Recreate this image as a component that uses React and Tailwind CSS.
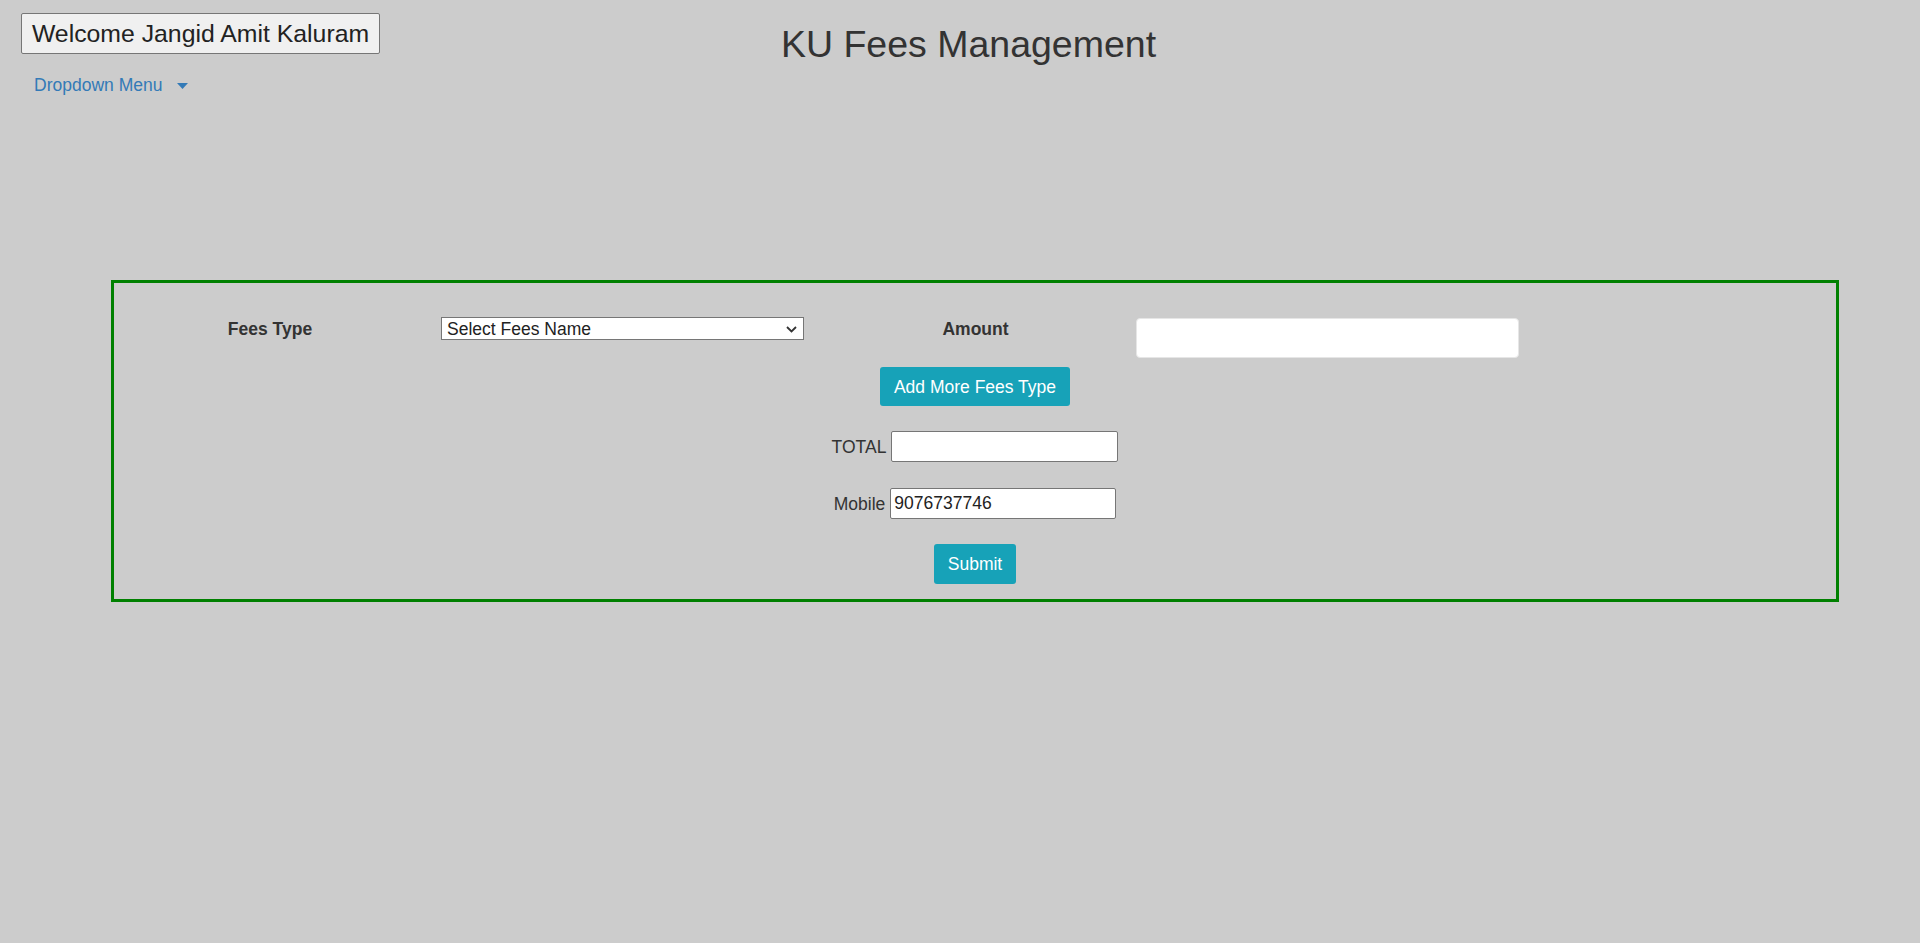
import React from "react";

export default function App() {
  const font = { fontFamily: '"Liberation Sans", Arial, sans-serif' };
  return (
    <div
      className="min-h-[943px] w-full bg-[#cccccc] text-[#333333]"
      style={font}
    >
      <div className="grid">
        <div className="col-start-1 row-start-1 flex flex-col items-start pl-[21px] pt-[13px]">
          <button className="flex h-[41px] w-[359px] items-center justify-center rounded-[2px] border border-[#767676] bg-[#f0f0f0] text-[24.8px] leading-[28px] text-[#222222]">
            Welcome Jangid Amit Kaluram
          </button>
          <div className="mt-[21px] flex items-center pl-[13px] text-[17.5px] leading-[20px] text-[#337ab7]">
            <span>Dropdown Menu</span>
            <svg
              className="ml-[15px] mt-[1px]"
              width="11"
              height="6"
              viewBox="0 0 11 6"
            >
              <path d="M0 0 L11 0 L5.5 6 Z" fill="#337ab7" />
            </svg>
          </div>
        </div>
        <div className="col-start-1 row-start-1 flex justify-center pl-[17px] pt-[24px]">
          <h1 className="text-[37.5px] font-normal leading-[41px] text-[#333333]">
            KU Fees Management
          </h1>
        </div>
      </div>

      <div className="ml-[111px] mt-[185px] w-[1728px] border-[3px] border-[#008000] pb-[15px] pt-[34px]">
        <div className="flex items-start">
          <div className="mt-[2px] w-[312px] text-center text-[17.5px] font-bold leading-[20px]">
            Fees Type
          </div>
          <div className="ml-[15px] flex h-[23px] w-[363px] items-center justify-between border border-[#767676] bg-white pl-[5px] pr-[6px] text-[17.5px] leading-[20px] text-[#222222]">
            <span>Select Fees Name</span>
            <svg width="11" height="7" viewBox="0 0 11 7" className="mt-[1px]">
              <path
                d="M1 1 L5.5 5.5 L10 1"
                fill="none"
                stroke="#333"
                strokeWidth="1.8"
              />
            </svg>
          </div>
          <div className="ml-[15px] mt-[2px] w-[313px] text-center text-[17.5px] font-bold leading-[20px]">
            Amount
          </div>
          <input
            className="ml-[4px] mt-[1px] h-[40px] w-[383px] rounded-[4px] border border-[#e6e6e6] bg-white px-[10px] text-[17px] outline-none"
            defaultValue=""
          />
        </div>

        <div className="mt-[9px] flex justify-center">
          <button className="h-[39px] w-[190px] rounded-[3px] bg-[#17a2b8] text-[17.5px] leading-[20px] text-white">
            Add More Fees Type
          </button>
        </div>

        <div className="mt-[25px] flex items-center justify-center">
          <span className="text-[17.5px] leading-[20px]">TOTAL</span>
          <input
            className="ml-[5px] h-[31px] w-[227px] rounded-[2px] border border-[#767676] bg-white px-[3px] text-[17.5px] outline-none"
            defaultValue=""
          />
        </div>

        <div className="mt-[26px] flex items-center justify-center">
          <span className="text-[17.5px] leading-[20px]">Mobile</span>
          <input
            className="ml-[5px] h-[31px] w-[226px] rounded-[2px] border border-[#767676] bg-white px-[3px] text-[17.5px] text-[#222222] outline-none"
            defaultValue="9076737746"
          />
        </div>

        <div className="mt-[25px] flex justify-center">
          <button className="h-[40px] w-[82px] rounded-[3px] bg-[#17a2b8] text-[17.5px] leading-[20px] text-white">
            Submit
          </button>
        </div>
      </div>
    </div>
  );
}
